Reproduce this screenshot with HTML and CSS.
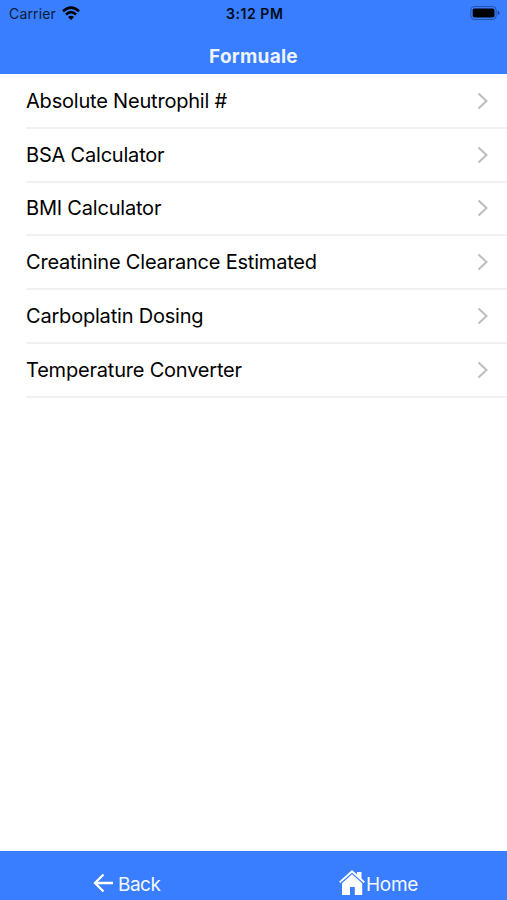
FILE: index.html
```html
<!DOCTYPE html>
<html lang="en">
<head>
<meta charset="utf-8">
<title>Formuale</title>
<link rel="stylesheet" href="styles.css">
</head>
<body>
<div class="app">
  <header class="header">
    <div class="status">
      <div class="carrier"><span>Carrier</span>
        <svg class="wifi" width="18" height="14" viewBox="0 0 18 14"><g fill="none" stroke="#000" stroke-width="2.6"><path d="M1 5.2Q9-1.8 17 5.2"/><path d="M4 8.4Q9 4 14 8.4"/></g><path d="M9 14L6 11Q9 8.6 12 11Z"/></svg>
      </div>
      <span class="time">3:12 PM</span>
      <svg class="battery" width="30" height="14" viewBox="0 0 30 14"><rect x=".8" y=".5" width="25.4" height="13" rx="3.6" fill="none" stroke="#2453a8"/><rect x="2.7" y="2.5" width="21.8" height="9" rx="1.8"/><path d="M27.8 4.8Q29.6 5.4 29.6 7T27.8 9.2Z" fill="#1d4590"/></svg>
    </div>
    <h1 class="title">Formuale</h1>
  </header>
  <main class="list">
    <a class="row"><span>Absolute Neutrophil #</span><svg class="chevron" viewBox="0 0 12 18"><path d="M1.5 1.5L9.5 9L1.5 16.5"/></svg></a>
    <a class="row"><span>BSA Calculator</span><svg class="chevron" viewBox="0 0 12 18"><path d="M1.5 1.5L9.5 9L1.5 16.5"/></svg></a>
    <a class="row"><span>BMI Calculator</span><svg class="chevron" viewBox="0 0 12 18"><path d="M1.5 1.5L9.5 9L1.5 16.5"/></svg></a>
    <a class="row"><span>Creatinine Clearance Estimated</span><svg class="chevron" viewBox="0 0 12 18"><path d="M1.5 1.5L9.5 9L1.5 16.5"/></svg></a>
    <a class="row"><span>Carboplatin Dosing</span><svg class="chevron" viewBox="0 0 12 18"><path d="M1.5 1.5L9.5 9L1.5 16.5"/></svg></a>
    <a class="row"><span>Temperature Converter</span><svg class="chevron" viewBox="0 0 12 18"><path d="M1.5 1.5L9.5 9L1.5 16.5"/></svg></a>
  </main>
  <nav class="toolbar">
    <a class="tab back"><svg width="21" height="20" viewBox="0 0 21 20"><path d="M20 10H2M10.5 1.5L2 10L10.5 18.5" fill="none" stroke="#fff" stroke-width="2.3"/></svg><span>Back</span></a>
    <a class="tab home"><svg width="26" height="26" viewBox="0 0 26 26" fill="#fff"><path d="M13 0L18 4.5V2H22.5V8.4L26 11.7L24.7 13.1L13 2.8L1.3 13.1L0 11.7Z"/><path d="M13 4.2L23.2 13.3V25H15.8V17H11V25H3V13.3Z"/></svg><span>Home</span></a>
  </nav>
</div>
</body>
</html>
```
FILE: styles.css
```css
* { box-sizing: border-box; }
body { margin: 0; background: #fff; font-family: Inter, "Liberation Sans", sans-serif; color: #000; }
.app { display: flex; flex-direction: column; height: 900px; overflow: hidden; }
.header { height: 74px; background: #387eff; }
.status { display: grid; grid-template-columns: 1fr auto 1fr; align-items: center; height: 28px; padding: 0 7px 0 9px; font-size: 14px; line-height: 28px; }
.carrier { display: flex; align-items: center; gap: 6px; letter-spacing: 0.15px; color: #0b1b38; }
.wifi { margin-top: -3px; }
.time { font-weight: 600; font-size: 14px; letter-spacing: 0.55px; margin-right: -0.5px; color: #030a18; }
.battery { justify-self: end; margin-top: -2px; }
.title { margin: 15px 0 0; font-size: 19px; line-height: 28px; letter-spacing: 0.25px; font-weight: 700; text-align: center; color: #eef4ff; }
.list { flex: 1; padding: 1px 0 0 26px; }
.row { display: flex; align-items: center; justify-content: space-between; height: 53.8px; padding-right: 18px; border-bottom: 2px solid #f1f1f2; font-size: 20px; letter-spacing: -0.2px; white-space: nowrap; }
.chevron { width: 12px; height: 18px; fill: none; stroke: #bdbdbf; stroke-width: 2; }
.toolbar { display: flex; height: 49px; padding-top: 16px; background: #387eff; color: #f5f9ff; font-size: 19px; }
.tab { display: flex; align-items: center; height: 32px; }
.tab span { padding-top: 2px; letter-spacing: -0.5px; }
.back { width: 246px; padding-left: 93px; gap: 4px; }
.home { padding-left: 93px; gap: 1px; }
.home span { letter-spacing: -0.3px; }
```
